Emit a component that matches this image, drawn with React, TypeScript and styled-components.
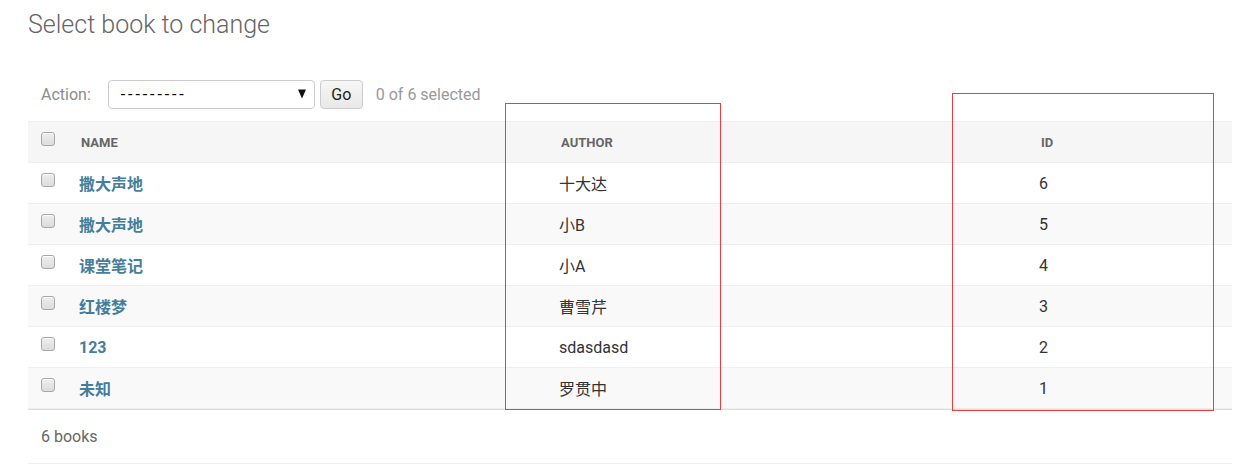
import React from "react";
import styled, { createGlobalStyle } from "styled-components";

const GlobalStyle = createGlobalStyle`
  html, body { margin: 0; padding: 0; background: #fff; }
  body {
    font-family: Roboto, "Noto Sans CJK SC", "Liberation Sans", sans-serif;
    color: #333;
    font-size: 16px;
  }
  * { box-sizing: border-box; }
`;

const Page = styled.div`
  position: relative;
  width: 1247px;
  height: 472px;
  padding: 10px 15px 0 28px;
`;

const Title = styled.h1`
  margin: 0;
  font-size: 25px;
  line-height: 30px;
  font-weight: 300;
  color: #666;
`;

const ActionBar = styled.div`
  display: flex;
  align-items: center;
  height: 28px;
  margin-top: 40px;
  padding-left: 13px;
  font-size: 16px;
`;

const ActionLabel = styled.span`
  color: #8c8c8c;
  margin-right: 17px;
`;

const Select = styled.div`
  position: relative;
  width: 207px;
  height: 29px;
  border: 1px solid #ccc;
  border-radius: 4px;
  display: flex;
  align-items: center;
  padding-left: 12px;
  color: #000;
  letter-spacing: 2.9px;
  background: #fff;
`;

const Arrow = styled.span`
  position: absolute;
  right: 8px;
  top: 50%;
  transform: translateY(-50%);
  width: 0;
  height: 0;
  border-left: 4px solid transparent;
  border-right: 4px solid transparent;
  border-top: 9px solid #111;
`;

const GoButton = styled.button`
  margin-left: 5px;
  height: 29px;
  width: 43px;
  padding: 0;
  border: 1px solid #ccc;
  border-radius: 4px;
  background: linear-gradient(#f7f7f7, #e8e8e8);
  font-family: Roboto, sans-serif;
  font-size: 16px;
  color: #222;
`;

const Counter = styled.span`
  margin-left: 13px;
  color: #999;
`;

const Results = styled.div`
  margin-top: 13px;
  border-bottom: 1px solid #ddd;
`;

const Row = styled.div<{ $bg: string; $head?: boolean }>`
  display: grid;
  grid-template-columns: 42px 480px 480px 1fr;
  height: ${(p) => (p.$head ? 42 : 41)}px;
  background: ${(p) => p.$bg};
  border-bottom: 1px solid #eee;
  border-top: ${(p) => (p.$head ? "1px solid #eee" : "none")};
`;

const CheckCell = styled.div`
  padding: 10px 0 0 13px;
`;

const Check = styled.span`
  display: block;
  width: 14px;
  height: 14px;
  border: 1px solid #a8a8a8;
  border-radius: 3px;
  background: linear-gradient(#eeeeee, #dcdcdc);
  box-shadow: inset 0 1px 0 #fff;
`;

const HeadCell = styled.div`
  display: flex;
  align-items: center;
  padding-left: 11px;
  font-size: 13px;
  font-weight: 700;
  color: #666;
  text-transform: uppercase;
`;

const Cell = styled.div`
  display: flex;
  align-items: center;
  padding-left: 9px;
  color: #333;
`;

const NameLink = styled.a`
  color: #447e9b;
  font-weight: 700;
  text-decoration: none;
`;

const Paginator = styled.div`
  height: 54px;
  display: flex;
  align-items: center;
  padding-left: 13px;
  color: #666;
  border-bottom: 1px solid #eee;
`;

const Mark = styled.div<{ $l: number; $t: number; $w: number; $h: number }>`
  position: absolute;
  left: ${(p) => p.$l}px;
  top: ${(p) => p.$t}px;
  width: ${(p) => p.$w}px;
  height: ${(p) => p.$h}px;
  border: 1px solid #ee3b3b;
  pointer-events: none;
`;

const books = [
  { name: "撒大声地", author: "十大达", id: 6 },
  { name: "撒大声地", author: "小B", id: 5 },
  { name: "课堂笔记", author: "小A", id: 4 },
  { name: "红楼梦", author: "曹雪芹", id: 3 },
  { name: "123", author: "sdasdasd", id: 2 },
  { name: "未知", author: "罗贯中", id: 1 },
];

export default function App() {
  return (
    <>
      <GlobalStyle />
      <Page>
        <Title>Select book to change</Title>
        <ActionBar>
          <ActionLabel>Action:</ActionLabel>
          <Select>
            ---------
            <Arrow />
          </Select>
          <GoButton>Go</GoButton>
          <Counter>0 of 6 selected</Counter>
        </ActionBar>
        <Results>
          <Row $bg="#f6f6f6" $head>
            <CheckCell>
              <Check />
            </CheckCell>
            <HeadCell>Name</HeadCell>
            <HeadCell>Author</HeadCell>
            <HeadCell>Id</HeadCell>
          </Row>
          {books.map((b, i) => (
            <Row key={b.id} $bg={i % 2 === 0 ? "#fff" : "#f9f9f9"}>
              <CheckCell>
                <Check />
              </CheckCell>
              <Cell>
                <NameLink href="#">{b.name}</NameLink>
              </Cell>
              <Cell>{b.author}</Cell>
              <Cell>{b.id}</Cell>
            </Row>
          ))}
        </Results>
        <Paginator>6 books</Paginator>
        <Mark $l={505} $t={103} $w={216} $h={307} />
        <Mark $l={952} $t={93} $w={262} $h={318} />
      </Page>
    </>
  );
}
